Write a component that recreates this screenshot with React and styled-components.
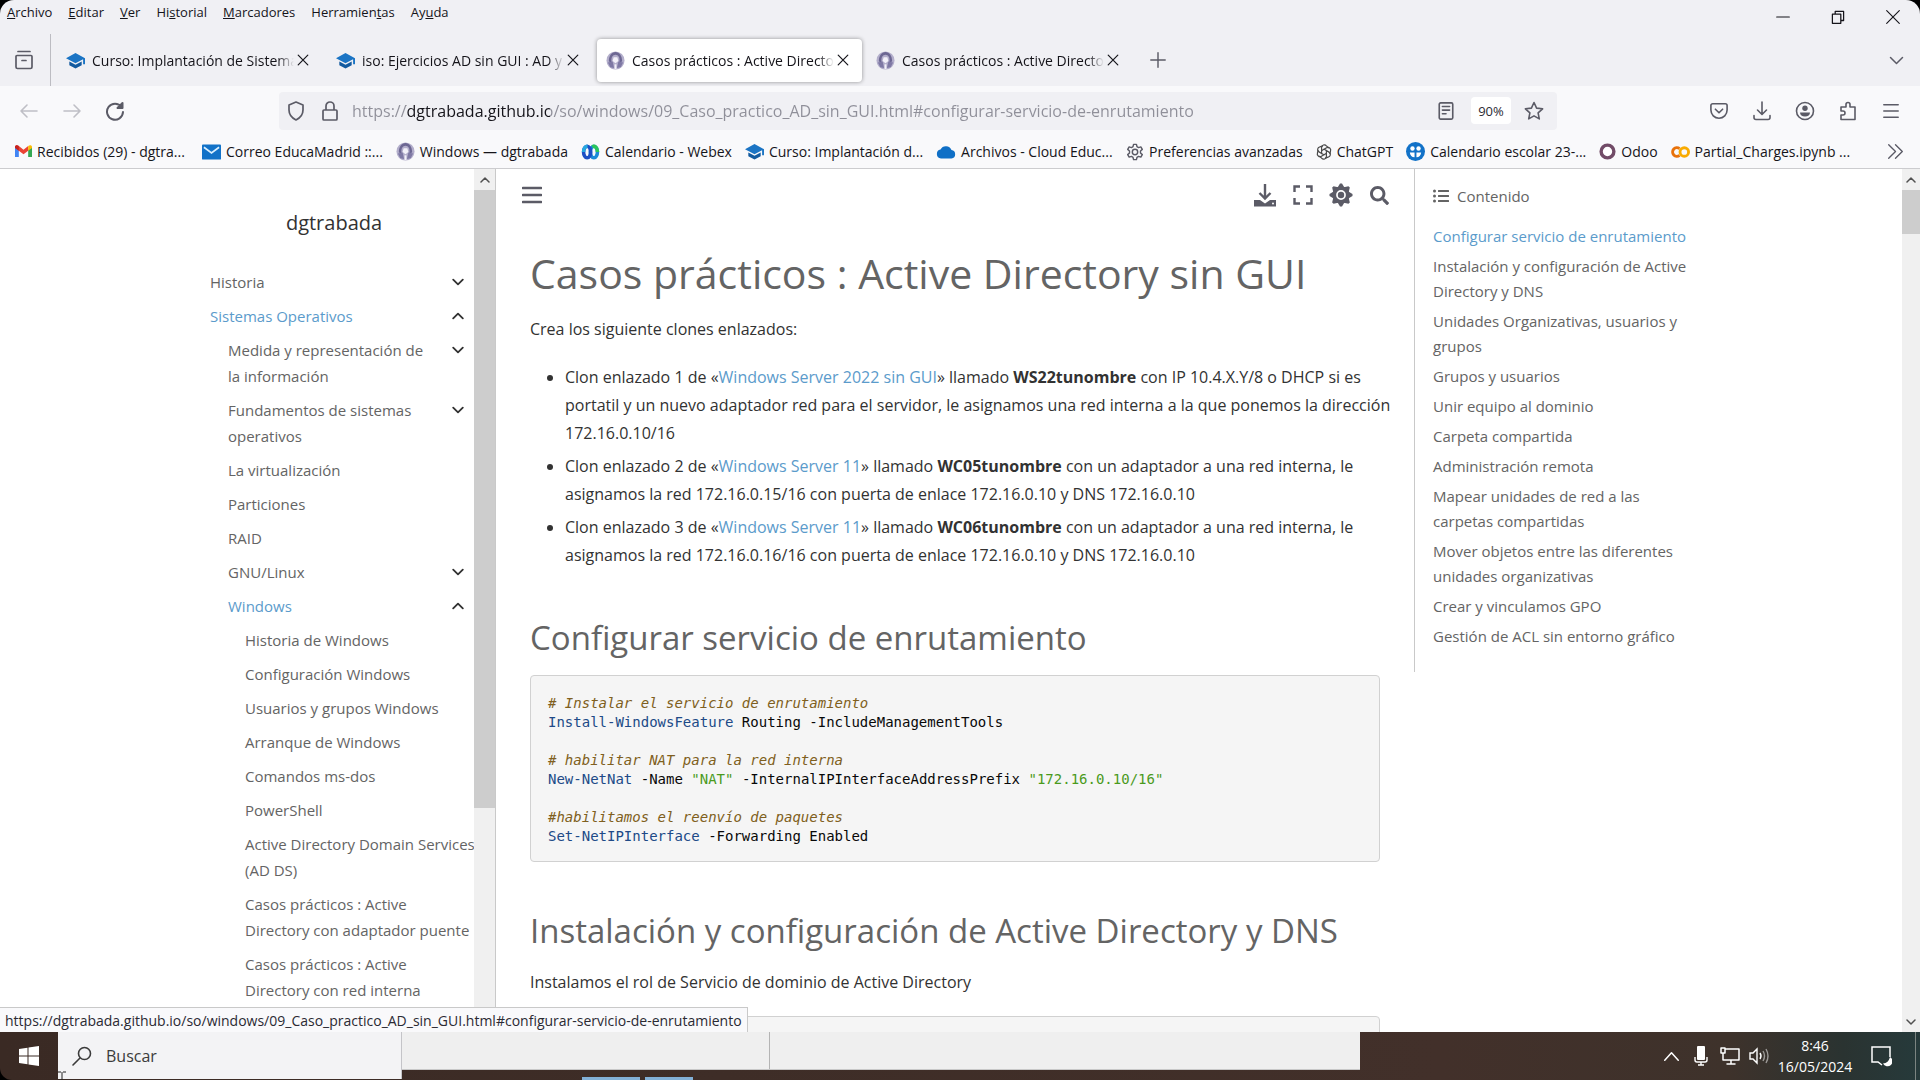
import React from 'react'
import styled, { createGlobalStyle } from 'styled-components';
import { FaSearch, FaListUl } from 'react-icons/fa';

const GlobalStyle = createGlobalStyle`
* {
    box-sizing: border-box;
}
body {
    margin: 0;
    background: #000;
    font-family: "Open Sans", "Noto Sans", sans-serif;
    color: #15141a;
}
button {
    font: inherit;
    color: inherit;
    background: none;
    border: none;
    padding: 0;
    margin: 0;
    cursor: pointer;
}
a {
    color: inherit;
    text-decoration: none;
}
`;

const Screen = styled.div`
    display: flex;
    flex-direction: column;
    height: 100vh;
    overflow: hidden;
`;
const Chrome = styled.header`
    flex: none;
    background: #f0f0f4;
    border-radius: 14px 14px 0 0;
    border-bottom: 1px solid #cccccf;
    overflow: hidden;
`;
const TopBar = styled.div`
    display: flex;
    justify-content: space-between;
    height: 34px;
`;
const Menus = styled.nav`
    display: flex;
    gap: 16px;
    padding-left: 7px;
    height: 23px;
    align-items: center;
    font-size: 13px;
`;
const WindowButtons = styled.div`
    display: flex;
    align-items: center;
`;
const WindowButton = styled.button`
    display: grid;
    place-items: center;
    width: 55px;
    height: 34px;
`;
const TabBar = styled.div`
    display: flex;
    align-items: center;
    height: 52px;
`;
const RecentButton = styled.button`
    display: grid;
    place-items: center;
    width: 51px;
    height: 52px;
    padding-right: 2px;
    border-right: 1px solid #bcbcc2;
    color: #5b5b66;
`;
const Tabs = styled.div`
    display: flex;
    gap: 5px;
    padding-left: 6px;
`;
const Tab = styled.div`
    display: flex;
    align-items: center;
    width: 265px;
    height: 43px;
    padding: 0 10px 0 9px;
    border-radius: 4px;
    background: ${({ active }) => active ? '#fff' : 'transparent'};
    box-shadow: ${({ active }) => active ? '0 0 4px rgba(0, 0, 0, 0.4)' : 'none'};
`;
const TabLabel = styled.button`
    display: flex;
    align-items: center;
    flex: 1;
    gap: 7px;
    min-width: 0;
`;
const TabTitle = styled.span`
    flex: 1;
    overflow: hidden;
    white-space: nowrap;
    text-align: left;
    font-size: 14px;
    mask-image: linear-gradient(to left, transparent, #000 16px);
`;
const CloseButton = styled.button`
    display: grid;
    place-items: center;
    width: 18px;
    height: 24px;
`;
const PlainButton = styled.button`
    display: grid;
    place-items: center;
    width: ${({ w }) => w || 43}px;
    height: 36px;
    color: ${({ faded }) => faded ? '#bfbfc6' : '#5b5b66'};
`;
const Spacer = styled.div`
    flex: 1;
`;
const NavBar = styled.div`
    display: flex;
    align-items: center;
    height: 49px;
    padding: 0 8px 0 7px;
    background: #f9f9fb;
`;
const UrlBar = styled.div`
    display: flex;
    align-items: center;
    flex: 1;
    height: 38px;
    margin: 0 140px 0 143px;
    border-radius: 4px;
    background: #f0f0f4;
`;
const UrlInput = styled.input`
    flex: 1;
    min-width: 0;
    padding: 0;
    margin-left: 5px;
    border: none;
    outline: none;
    font: inherit;
    font-size: 16px;
    color: transparent;
    background: linear-gradient(90deg, #8f8f99 54px, #15141a 54px, #15141a 198px, #8f8f99 198px);
    background-clip: text;
`;
const ZoomLevel = styled.button`
    width: 40px;
    height: 27px;
    border-radius: 4px;
    background: #fff;
    font-size: 13px;
    color: #2b2a33;
`;
const BookmarkBar = styled.nav`
    display: flex;
    align-items: center;
    gap: 13px;
    height: 33px;
    padding: 0 15px;
    background: #f9f9fb;
    font-size: 14px;
`;
const Bookmark = styled.a`
    display: flex;
    align-items: center;
    gap: 5px;
    white-space: nowrap;
`;
const BookmarkTitle = styled.span`
    min-width: ${({ long }) => long ? '152px' : '0'};
`;
const Page = styled.div`
    display: flex;
    flex: 1;
    min-height: 0;
    overflow: hidden;
    background: #fff;
    position: relative;
`;
const Sidebar = styled.aside`
    display: flex;
    width: 496px;
    flex: none;
    border-right: 1px solid #c9c9c9;
`;
const SidebarContent = styled.div`
    flex: 1;
    min-width: 0;
    padding-left: 210px;
`;
const SiteName = styled.a`
    display: block;
    padding: 40px 0 28px;
    margin-right: 16px;
    text-align: center;
    font-size: 20px;
    line-height: 28px;
    color: #323232;
`;
const NavItem = styled.div`
    display: flex;
    align-items: flex-start;
    justify-content: space-between;
    padding: 4px 0 4px ${({ level }) => [0, 18, 35][level]}px;
    font-size: 15px;
    line-height: 26px;
    color: ${({ active }) => active ? '#5b9bcb' : '#646464'};
`;
const NavLink = styled.a`
    max-width: ${({ narrow }) => narrow ? '204px' : 'none'};
    margin-right: ${({ narrow }) => narrow ? '0' : '-8px'};
`;
const Toggle = styled.button`
    width: 32px;
    height: 24px;
    flex: none;
    color: #323232;
`;
const Scrollbar = styled.div`
    display: flex;
    flex-direction: column;
    align-items: center;
    width: ${({ w }) => w}px;
    flex: none;
    background: #f0f0f0;
`;
const ScrollButton = styled.button`
    display: grid;
    place-items: center;
    width: 100%;
    height: 21px;
    color: #505050;
`;
const Thumb = styled.div`
    width: 100%;
    height: ${({ size }) => size};
    background: #cdcdcd;
`;
const Main = styled.main`
    flex: 1;
    min-width: 0;
`;
const ArticleHeader = styled.div`
    display: flex;
    align-items: center;
    justify-content: space-between;
    height: 52px;
    padding: 0 16px 0 24px;
`;
const HeaderButtons = styled.div`
    display: flex;
`;
const Article = styled.article`
    padding: 0 34px;
    font-size: 16px;
    line-height: 28px;
    color: #323232;
`;
const Title = styled.h1`
    margin: 22px 0 12px;
    font-size: 41px;
    font-weight: 400;
    line-height: 60px;
    color: #646464;
`;
const Heading = styled.h2`
    margin: 45px 0 13px;
    font-size: 33px;
    font-weight: 400;
    line-height: 48px;
    color: #646464;
`;
const Text = styled.p`
    margin: 0 0 20px;
`;
const List = styled.ul`
    margin: 0 -20px 0 0;
    padding-left: 35px;
`;
const ListItem = styled.li`
    margin-bottom: 5px;
`;
const Link = styled.a`
    color: #5b9bcb;
`;
const Code = styled.pre`
    margin: 0;
    min-height: 187px;
    padding: 18px 17px 15px;
    border: 1px solid #d1d1d1;
    border-radius: 4px;
    background: #f5f5f5;
    font-family: "DejaVu Sans Mono", monospace;
    font-size: 14px;
    line-height: 19px;
    color: #080808;
`;
const Comment = styled.span`
    font-style: italic;
    color: #7f5f20;
`;
const Command = styled.span`
    color: #204a87;
`;
const Str = styled.span`
    color: #4a9a1c;
`;
const Toc = styled.aside`
    width: 488px;
    flex: none;
    align-self: flex-start;
    height: 503px;
    padding: 13px 0 0 18px;
    border-left: 1px solid #c9c9c9;
    font-size: 15px;
    line-height: 25px;
    color: #646464;
`;
const TocTitle = styled.div`
    display: flex;
    align-items: center;
    gap: 8px;
    height: 28px;
    margin-bottom: 14px;
`;
const TocLink = styled.a`
    display: block;
    width: 268px;
    margin-bottom: 5px;
    color: ${({ active }) => active ? '#5b9bcb' : '#646464'};
`;
const StatusUrl = styled.div`
    position: absolute;
    left: 0;
    bottom: 0;
    height: 25px;
    padding: 0 5px;
    border-top: 1px solid #c9c9c9;
    border-right: 1px solid #c9c9c9;
    background: #f9f9fb;
    font-size: 14px;
    line-height: 25px;
    color: #2b2a33;
`;
const Taskbar = styled.footer`
    display: flex;
    flex: none;
    height: 48px;
    background: linear-gradient(90deg, #3a2a24, #42302a 75%, #3e322b 90%, #2a3331 96%, #263a3b);
    color: #fff;
    border-bottom-left-radius: 12px;
`;
const StartButton = styled.button`
    display: grid;
    place-items: center;
    width: 58px;
`;
const SearchBox = styled.label`
    display: flex;
    align-items: center;
    gap: 14px;
    width: 344px;
    height: 47px;
    padding-left: 14px;
    background: #f3f3f5;
    border-right: 1px solid #c4c4c8;
    color: #3b3b3b;
    position: relative;
`;
const SearchInput = styled.input`
    flex: 1;
    min-width: 0;
    padding: 0;
    border: none;
    outline: none;
    background: none;
    font: inherit;
    font-size: 16px;
    color: #3b3b3b;
    &::placeholder {
        color: #3b3b3b;
    }
`;
const TextCursor = styled.svg`
    position: absolute;
    left: 0;
    bottom: -2px;
`;
const Previews = styled.div`
    display: flex;
    flex-direction: column;
    justify-content: space-between;
    width: 958px;
`;
const PreviewRow = styled.div`
    display: flex;
    height: 38px;
    background: #efefef;
    border-bottom: 1px solid #c8c8c8;
`;
const Preview = styled.div`
    width: 368px;
    border-right: 1px solid #b4b4b4;
`;
const Indicators = styled.div`
    display: flex;
    gap: 5px;
    padding-left: 180px;
`;
const Indicator = styled.div`
    width: ${({ w }) => w}px;
    height: 3px;
    background: #82b0d6;
`;
const Tray = styled.div`
    display: flex;
    align-items: center;
    margin-left: auto;
    padding-right: 10px;
    border-right: 1px solid #7b8481;
    margin-right: 4px;
`;
const TrayButton = styled.button`
    display: grid;
    place-items: center;
    width: ${({ w }) => w || 29}px;
    height: 48px;
`;
const Clock = styled.button`
    width: 84px;
    height: 48px;
    font-size: 14px;
    line-height: 21px;
    text-align: center;
`;

/* line icon, every path is stroked with the current colour */
const Stroke = ({ size = 20, width = 1.6, d }) => (
    <svg width={size} height={size} viewBox="0 0 20 20" fill="none" stroke="currentColor"
        strokeWidth={width} strokeLinecap="round" strokeLinejoin="round" aria-hidden="true">
        <path d={d} />
    </svg>
)

const Chevron = ({ open, size = 12 }) => (
    <Stroke size={size} width={3} d={open ? 'M2 14l8-8 8 8' : 'M2 6l8 8 8-8'} />
)

const Cap = () => (
    <svg width="19" height="19" viewBox="0 0 20 20" aria-hidden="true">
        <path d="M10 2L0 7.500l10 5.500 8-4.400V14h2V7.500z" fill="#1b74c4" />
        <path d="M3.500 11v4l6.500 3.500 6.500-3.500v-4L10 14.600z" fill="#125a9f" />
    </svg>
)
const Emblem = () => (
    <svg width="19" height="19" viewBox="0 0 20 20" aria-hidden="true">
        <circle cx="10" cy="10" r="9.500" fill="#b3aecb" />
        <path d="M3 11c0-6 3-10 7-10s7 4 7 10l-3 1c1-5-1-8-4-8s-5 3-4 8z" fill="#6d6793" />
        <path d="M8 6.500h4l1 4-3 2.500-3-2.500z" fill="#f3f1fa" />
        <path d="M2 12l5-1 1.500 7-4-1zM18 12l-5-1-1.500 7 4-1z" fill="#7f79a5" />
        <path d="M9 14h2v5H9z" fill="#f3f1fa" />
    </svg>
)
const Gmail = () => (
    <svg width="17" height="17" viewBox="0 0 20 20" aria-hidden="true">
        <path d="M0 5v11.500h4.500V8z" fill="#4285f4" />
        <path d="M20 5v11.500h-4.500V8z" fill="#34a853" />
        <path d="M0 5c0-2.500 2.500-3 4.500-1.500L10 8l5.500-4.500V9L10 13.200 4.500 9z" fill="#ea4335" />
        <path d="M0 5c0-2.500 2.500-3 4.500-1.500V9L0 6z" fill="#c5221f" />
        <path d="M20 5c0-2.500-2.500-3-4.500-1.500V9L20 6z" fill="#fbbc04" />
    </svg>
)
const Mail = () => (
    <svg width="19" height="16" viewBox="0 0 20 16" aria-hidden="true">
        <rect width="20" height="16" rx="1" fill="#1272c8" />
        <path d="M2 3l8 6 8-6" fill="none" stroke="#d9efff" strokeWidth="1.800" />
    </svg>
)
const Webex = () => (
    <svg width="19" height="16" viewBox="0 0 20 18" fill="none" strokeWidth="4" aria-hidden="true">
        <ellipse cx="13.800" cy="9" rx="4" ry="6.500" stroke="#1b8ad8" />
        <path d="M12 3c3-1.500 6 1 5.800 6" stroke="#2bc65a" />
        <ellipse cx="6.200" cy="9" rx="4" ry="6.500" stroke="#1c4fc4" />
        <path d="M2.200 9c0-4 2-6.500 4.500-6.500" stroke="#27a9e0" />
    </svg>
)
const Cloud = () => (
    <svg width="20" height="14" viewBox="0 0 20 14" aria-hidden="true">
        <path d="M5 13.500a4.500 4.500 0 0 1-.5-8.900A6 6 0 0 1 15.500 5 4.300 4.300 0 0 1 15.500 13.500z" fill="#0f6fc6" />
    </svg>
)
const gearPath = 'M8.400 1h3.200l.6 2.600 1.700 1 2.600-.8 1.600 2.800-2 1.800v2.100l2 1.900-1.600 2.800-2.600-.8-1.700 1-.6 2.600H8.400l-.6-2.600-1.700-1-2.600.8-1.600-2.800 2-1.900V8.400l-2-1.800 1.600-2.800 2.600.8 1.700-1z'
const Prefs = () => (
    <svg width="18" height="20" viewBox="0 0 20 19" fill="none" stroke="#5b5b66" strokeWidth="1.600" strokeLinejoin="round" aria-hidden="true">
        <path d={gearPath} />
        <circle cx="10" cy="9.500" r="3" />
    </svg>
)
const OpenAi = () => (
    <svg width="16" height="16" viewBox="0 0 20 20" fill="none" stroke="#4a4a4a" strokeWidth="1.500" aria-hidden="true">
        {[0, 60, 120, 180, 240, 300].map((angle) => (
            <path key={angle} transform={`rotate(${angle} 10 10)`} d="M10 6.500L7 8.300V4.500a3.400 3.400 0 0 1 6-2.200L16 5" />
        ))}
    </svg>
)
const Calendar = () => (
    <svg width="19" height="19" viewBox="0 0 20 20" aria-hidden="true">
        <circle cx="10" cy="10" r="10" fill="#1272c8" />
        <circle cx="6.800" cy="6.800" r="2.300" fill="#fff" />
        <circle cx="13.200" cy="6.800" r="2.300" fill="#fff" />
        <path d="M4 11h5v5c-3 0-4.500-2-5-5zM11 11h5c-.5 3-2 5-5 5z" fill="#fff" />
    </svg>
)
const Odoo = () => (
    <svg width="17" height="17" viewBox="0 0 20 20" aria-hidden="true">
        <circle cx="10" cy="10" r="7.500" fill="#fff" stroke="#714b67" strokeWidth="4" />
    </svg>
)
const Colab = () => (
    <svg width="19" height="14" viewBox="0 0 20 14" fill="none" strokeWidth="3" aria-hidden="true">
        <path d="M9 10.500a4.500 4.500 0 1 1 0-7" stroke="#e8710a" />
        <circle cx="14" cy="7" r="4.500" stroke="#f9ab00" />
    </svg>
)
const Download = () => (
    <svg width="24" height="24" viewBox="0 0 24 24" aria-hidden="true">
        <path d="M12 1v14M6.500 10l5.500 5.500 5.500-5.500" fill="none" stroke="currentColor" strokeWidth="2.400" />
        <path d="M1 17h6l5 3.500 5-3.500h6v6.500H1z" fill="currentColor" />
        <circle cx="20" cy="20.500" r="1" fill="#fff" />
    </svg>
)
const Expand = () => (
    <svg width="20" height="20" viewBox="0 0 20 20" fill="none" stroke="currentColor" strokeWidth="2.400" aria-hidden="true">
        <path d="M1.500 7V1.500H7M13 1.500h5.500V7M18.500 13v5.500H13M7 18.500H1.500V13" />
    </svg>
)
const Gear = () => (
    <svg width="24" height="24" viewBox="0 0 24 24" aria-hidden="true">
        {[0, 45, 90, 135, 180, 225, 270, 315].map((angle) => (
            <path key={angle} transform={`rotate(${angle} 12 12)`} d="M8 5.500L11 0.500h2L16 5.500z" fill="currentColor" />
        ))}
        <circle cx="12" cy="12" r="6.700" fill="none" stroke="currentColor" strokeWidth="3.600" />
        <circle cx="12" cy="12" r="3.200" fill="currentColor" />
    </svg>
)

const menus = [['', 'A', 'rchivo'], ['', 'E', 'ditar'], ['', 'V', 'er'], ['Hi', 's', 'torial'], ['', 'M', 'arcadores'], ['Herramien', 't', 'as'], ['Ay', 'u', 'da']];

const tabs = [
    { title: 'Curso: Implantación de Sistema', icon: <Cap /> },
    { title: 'iso: Ejercicios AD sin GUI : AD y', icon: <Cap /> },
    { title: 'Casos prácticos : Active Directo', icon: <Emblem />, active: true },
    { title: 'Casos prácticos : Active Directo', icon: <Emblem /> },
];

const bookmarks = [
    { title: 'Recibidos (29) - dgtra...', icon: <Gmail />, long: true },
    { title: 'Correo EducaMadrid ::...', icon: <Mail />, long: true },
    { title: 'Windows — dgtrabada', icon: <Emblem /> },
    { title: 'Calendario - Webex', icon: <Webex /> },
    { title: 'Curso: Implantación d...', icon: <Cap />, long: true },
    { title: 'Archivos - Cloud Educ...', icon: <Cloud />, long: true },
    { title: 'Preferencias avanzadas', icon: <Prefs /> },
    { title: 'ChatGPT', icon: <OpenAi /> },
    { title: 'Calendario escolar 23-...', icon: <Calendar />, long: true },
    { title: 'Odoo', icon: <Odoo /> },
    { title: 'Partial_Charges.ipynb ...', icon: <Colab />, long: true },
];

const navItems = [
    { title: 'Historia', level: 0, toggle: 'closed' },
    { title: 'Sistemas Operativos', level: 0, toggle: 'open', active: true },
    { title: 'Medida y representación de la información', level: 1, toggle: 'closed' },
    { title: 'Fundamentos de sistemas operativos', level: 1, toggle: 'closed' },
    { title: 'La virtualización', level: 1 },
    { title: 'Particiones', level: 1 },
    { title: 'RAID', level: 1 },
    { title: 'GNU/Linux', level: 1, toggle: 'closed' },
    { title: 'Windows', level: 1, toggle: 'open', active: true },
    { title: 'Historia de Windows', level: 2 },
    { title: 'Configuración Windows', level: 2 },
    { title: 'Usuarios y grupos Windows', level: 2 },
    { title: 'Arranque de Windows', level: 2 },
    { title: 'Comandos ms-dos', level: 2 },
    { title: 'PowerShell', level: 2 },
    { title: 'Active Directory Domain Services (AD DS)', level: 2 },
    { title: 'Casos prácticos : Active Directory\u00a0con adaptador puente', level: 2 },
    { title: 'Casos prácticos : Active Directory\u00a0con red interna', level: 2 },
];

const contents = [
    'Configurar servicio de enrutamiento',
    'Instalación y configuración de Active Directory y DNS',
    'Unidades Organizativas, usuarios y grupos',
    'Grupos y usuarios',
    'Unir equipo al dominio',
    'Carpeta compartida',
    'Administración remota',
    'Mapear unidades de red a las carpetas compartidas',
    'Mover objetos entre las diferentes unidades organizativas',
    'Crear y vinculamos GPO',
    'Gestión de ACL sin entorno gráfico',
];

const pageUrl = 'https://dgtrabada.github.io/so/windows/09_Caso_practico_AD_sin_GUI.html#configurar-servicio-de-enrutamiento';

const BrowserChrome = () => (
    <Chrome>
        <TopBar>
            <Menus>
                {menus.map(([before, key, after]) => (
                    <button key={before + key + after}>{before}<u>{key}</u>{after}</button>
                ))}
            </Menus>
            <WindowButtons>
                <WindowButton aria-label="Minimizar"><Stroke size={14} width={1.600} d="M1 10h18" /></WindowButton>
                <WindowButton aria-label="Restaurar"><Stroke size={14} width={1.800} d="M2 6h12v13H2zM6 6V2h12v13h-4" /></WindowButton>
                <WindowButton aria-label="Cerrar"><Stroke size={14} width={1.600} d="M1 1l18 18M19 1L1 19" /></WindowButton>
            </WindowButtons>
        </TopBar>
        <TabBar>
            <RecentButton aria-label="Vista reciente">
                <Stroke size={20} width={1.700} d="M4 1.500h12M3 5.500h14a1 1 0 0 1 1 1V17a1.500 1.500 0 0 1-1.500 1.500h-13A1.500 1.500 0 0 1 2 17V6.500a1 1 0 0 1 1-1zM8 10.500h4" />
            </RecentButton>
            <Tabs>
                {tabs.map((tab, index) => (
                    <Tab key={index} active={tab.active}>
                        <TabLabel>{tab.icon}<TabTitle>{tab.title}</TabTitle></TabLabel>
                        <CloseButton aria-label="Cerrar pestaña"><Stroke size={12} width={2} d="M2 2l16 16M18 2L2 18" /></CloseButton>
                    </Tab>
                ))}
            </Tabs>
            <PlainButton w={52} aria-label="Nueva pestaña"><Stroke size={16} width={1.800} d="M10 1v18M1 10h18" /></PlainButton>
            <Spacer />
            <PlainButton w={48} aria-label="Listar pestañas"><Stroke size={15} width={2} d="M2 6l8 8 8-8" /></PlainButton>
        </TabBar>
        <NavBar>
            <PlainButton faded aria-label="Atrás"><Stroke d="M18 10H2M8 4l-6 6 6 6" /></PlainButton>
            <PlainButton faded aria-label="Adelante"><Stroke d="M2 10h16M12 4l6 6-6 6" /></PlainButton>
            <PlainButton aria-label="Recargar"><Stroke width={2} d="M16.500 6A8 8 0 1 0 18 11M17.500 2v5h-5z" /></PlainButton>
            <UrlBar>
                <PlainButton w={34} aria-label="Protección"><Stroke width={1.700} d="M10 1l7 3v5c0 5-3 8-7 10-4-2-7-5-7-10V4z" /></PlainButton>
                <PlainButton w={34} aria-label="Seguridad"><Stroke width={1.700} d="M4 9h12a1 1 0 0 1 1 1v8a1 1 0 0 1-1 1H4a1 1 0 0 1-1-1v-8a1 1 0 0 1 1-1zM6 9V5a4 4 0 0 1 8 0v4" /></PlainButton>
                <UrlInput type="text" aria-label="Dirección" defaultValue={pageUrl} />
                <PlainButton w={50} aria-label="Vista de lectura"><Stroke size={18} width={1.800} d="M4 1h12a1.500 1.500 0 0 1 1.500 1.500v15A1.500 1.500 0 0 1 16 19H4a1.500 1.500 0 0 1-1.500-1.500v-15A1.500 1.500 0 0 1 4 1zM6 5h8M6 9h8M6 13h4" /></PlainButton>
                <ZoomLevel>90%</ZoomLevel>
                <PlainButton w={46} aria-label="Añadir marcador"><Stroke width={1.600} d="M10 1.500l2.600 5.600 6 .7-4.500 4.100 1.200 6L10 14.900l-5.300 3 1.200-6L1.400 7.800l6-.7z" /></PlainButton>
            </UrlBar>
            <PlainButton aria-label="Pocket"><Stroke size={18} width={1.800} d="M3 2h14a2 2 0 0 1 2 2v5c0 5-4 9-9 9s-9-4-9-9V4a2 2 0 0 1 2-2zM6 8l4 4 4-4" /></PlainButton>
            <PlainButton aria-label="Descargas"><Stroke d="M10 1v12M5.500 9l4.500 4.500L14.500 9M2 14.500v2A2 2 0 0 0 4 18.500h12a2 2 0 0 0 2-2v-2" /></PlainButton>
            <PlainButton aria-label="Cuenta">
                <svg width="20" height="20" viewBox="0 0 20 20" aria-hidden="true">
                    <circle cx="10" cy="10" r="8.500" fill="none" stroke="currentColor" strokeWidth="1.600" />
                    <circle cx="10" cy="7.200" r="2.700" fill="currentColor" />
                    <path d="M5 11.500h10c0 2.500-2 4-5 4s-5-1.500-5-4z" fill="currentColor" />
                </svg>
            </PlainButton>
            <PlainButton aria-label="Extensiones"><Stroke d="M3 18.500v-4.500h2a2 2 0 0 0 0-4H3V6h5V3.500a2 2 0 0 1 4 0V6h5v12.500z" /></PlainButton>
            <PlainButton aria-label="Menú"><Stroke size={18} width={1.700} d="M2 3h16M2 10h16M2 17h16" /></PlainButton>
        </NavBar>
        <BookmarkBar>
            {bookmarks.map((item) => (
                <Bookmark key={item.title} href="#">
                    {item.icon}
                    <BookmarkTitle long={item.long}>{item.title}</BookmarkTitle>
                </Bookmark>
            ))}
            <Spacer />
            <PlainButton w={20} aria-label="Más marcadores"><Stroke size={17} width={1.600} d="M2 2l8 8-8 8M10 2l8 8-8 8" /></PlainButton>
        </BookmarkBar>
    </Chrome>
)

const SiteSidebar = () => (
    <Sidebar>
        <SidebarContent>
            <SiteName href="#">dgtrabada</SiteName>
            {navItems.map((item) => (
                <NavItem key={item.title} level={item.level} active={item.active}>
                    <NavLink href="#" narrow={item.toggle}>{item.title}</NavLink>
                    {item.toggle && (
                        <Toggle aria-label={item.title}><Chevron open={item.toggle === 'open'} /></Toggle>
                    )}
                </NavItem>
            ))}
        </SidebarContent>
        <Scrollbar w={21}>
            <ScrollButton aria-label="Subir"><Chevron open size={10} /></ScrollButton>
            <Thumb size="618px" />
        </Scrollbar>
    </Sidebar>
)

const App = () => {
  return (
    <Screen>
        <GlobalStyle />
        <BrowserChrome />
        <Page>
            <SiteSidebar />
            <Main>
                <ArticleHeader>
                    <PlainButton w={24} aria-label="Alternar barra lateral"><Stroke width={2.600} d="M1 3h18M1 10h18M1 17h18" /></PlainButton>
                    <HeaderButtons>
                        <PlainButton w={38} aria-label="Descargar página"><Download /></PlainButton>
                        <PlainButton w={38} aria-label="Pantalla completa"><Expand /></PlainButton>
                        <PlainButton w={38} aria-label="Ajustes"><Gear /></PlainButton>
                        <PlainButton w={38} aria-label="Buscar"><FaSearch size={19} /></PlainButton>
                    </HeaderButtons>
                </ArticleHeader>
                <Article>
                    <Title>Casos prácticos : Active Directory sin GUI</Title>
                    <Text>Crea los siguiente clones enlazados:</Text>
                    <List>
                        <ListItem>Clon enlazado 1 de «<Link href="#">Windows Server 2022 sin GUI</Link>» llamado <b>WS22tunombre</b> con IP 10.4.X.Y/8 o DHCP si es portatil y un nuevo adaptador red para el servidor, le asignamos una red interna a la que ponemos la dirección 172.16.0.10/16</ListItem>
                        <ListItem>Clon enlazado 2 de «<Link href="#">Windows Server 11</Link>» llamado <b>WC05tunombre</b> con un adaptador a una red interna, le asignamos la red 172.16.0.15/16 con puerta de enlace 172.16.0.10 y DNS 172.16.0.10</ListItem>
                        <ListItem>Clon enlazado 3 de «<Link href="#">Windows Server 11</Link>» llamado <b>WC06tunombre</b> con un adaptador a una red interna, le asignamos la red 172.16.0.16/16 con puerta de enlace 172.16.0.10 y DNS 172.16.0.10</ListItem>
                    </List>
                    <Heading>Configurar servicio de enrutamiento</Heading>
                    <Code>
                        <Comment># Instalar el servicio de enrutamiento</Comment>{'\n'}
                        <Command>Install-WindowsFeature</Command> Routing -IncludeManagementTools{'\n\n'}
                        <Comment># habilitar NAT para la red interna</Comment>{'\n'}
                        <Command>New-NetNat</Command> -Name <Str>"NAT"</Str> -InternalIPInterfaceAddressPrefix <Str>"172.16.0.10/16"</Str>{'\n\n'}
                        <Comment>#habilitamos el reenvío de paquetes</Comment>{'\n'}
                        <Command>Set-NetIPInterface</Command> -Forwarding Enabled
                    </Code>
                    <Heading>Instalación y configuración de Active Directory y DNS</Heading>
                    <Text>Instalamos el rol de Servicio de dominio de Active Directory</Text>
                    <Code />
                </Article>
            </Main>
            <Toc>
                <TocTitle><FaListUl size={16} />Contenido</TocTitle>
                {contents.map((title, index) => (
                    <TocLink key={title} href="#" active={index === 0}>{title}</TocLink>
                ))}
            </Toc>
            <Scrollbar w={18}>
                <ScrollButton aria-label="Subir"><Chevron open size={10} /></ScrollButton>
                <Thumb size="44px" />
                <Spacer />
                <ScrollButton aria-label="Bajar"><Chevron size={10} /></ScrollButton>
            </Scrollbar>
            <StatusUrl>{pageUrl}</StatusUrl>
        </Page>
        <Taskbar>
            <StartButton aria-label="Inicio">
                <svg width="20" height="20" viewBox="0 0 20 20" fill="#fff" aria-hidden="true">
                    <path d="M0 3l8.500-1.300v7.800H0zM9.500 1.500L20 0v9.500H9.500zM0 10.500h8.500v7.800L0 17zM9.500 10.500H20V20L9.500 18.500z" />
                </svg>
            </StartButton>
            <SearchBox>
                <Stroke size={20} width={1.600} d="M12.500 1.500a6 6 0 1 1 0 12 6 6 0 1 1 0-12M8 12l-7 7" />
                <SearchInput type="text" aria-label="Buscar" placeholder="Buscar" />
                <TextCursor width="8" height="10" viewBox="0 0 8 10" stroke="#222"><path d="M0 1h3M5 1h3M4 1v9" /></TextCursor>
            </SearchBox>
            <Previews>
                <PreviewRow><Preview /></PreviewRow>
                <Indicators><Indicator w={58} /><Indicator w={48} /></Indicators>
            </Previews>
            <Tray>
                <TrayButton aria-label="Iconos ocultos"><Stroke size={15} width={2} d="M1 15l9-10 9 10" /></TrayButton>
                <TrayButton aria-label="Micrófono">
                    <svg width="14" height="20" viewBox="0 0 14 20" aria-hidden="true">
                        <rect x="3" y="0" width="8" height="14" rx="1" fill="#fff" />
                        <path d="M1 11v3q0 2 2 2h8q2 0 2-2v-3M7 16v3M4 19h6" fill="none" stroke="#fff" strokeWidth="1.400" />
                    </svg>
                </TrayButton>
                <TrayButton aria-label="Red"><Stroke width={1.500} d="M6 3h13v11H3V9M1 2h4v5H1zM3 7v2M11 14v4M7 18h8" /></TrayButton>
                <TrayButton aria-label="Volumen">
                    <svg width="20" height="20" viewBox="0 0 20 20" fill="none" stroke="#fff" strokeWidth="1.400" aria-hidden="true">
                        <path d="M1 7h3l4-4v14l-4-4H1zM11 7q2 3 0 6" />
                        <path d="M14 5q3 5 0 10M17 3q4 7 0 14" opacity="0.500" />
                    </svg>
                </TrayButton>
                <Clock>8:46<br />16/05/2024</Clock>
                <TrayButton w={48} aria-label="Notificaciones">
                    <svg width="22" height="22" viewBox="0 0 22 22" fill="none" stroke="#fff" strokeWidth="1.500" aria-hidden="true">
                        <path d="M12 20l-4-3H2V2h18v10" />
                        <path d="M20 12a5 5 0 1 1-7 6.500q5.500-.5 7-6.500z" fill="#fff" stroke="none" />
                    </svg>
                </TrayButton>
            </Tray>
        </Taskbar>
    </Screen>
  )
}

export default App
